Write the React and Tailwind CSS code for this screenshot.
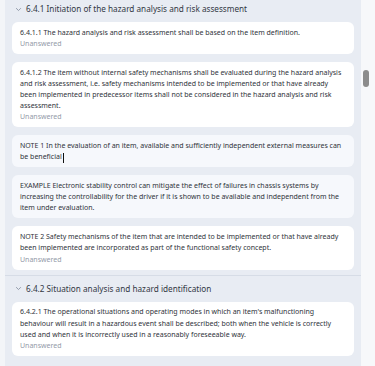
import React from "react";

const Chevron = () => (
  <svg width="7" height="7" viewBox="0 0 10 10" className="shrink-0">
    <path d="M2 3.5 L5 6.5 L8 3.5" fill="none" stroke="#8a93a3" strokeWidth="1.3" strokeLinecap="round" strokeLinejoin="round" />
  </svg>
);

const Card = ({ children, answered = true, note = false, caret = false }) => (
  <div className={`rounded-[6px] px-[8px] py-[4.75px] ${note ? "bg-[#f6f8fc]" : "bg-white"}`}>
    <div className="text-[#2f333a] text-[7px] leading-[11.2px]">
      {children}
      {caret && <span className="inline-block w-[1.2px] h-[10px] bg-[#111] align-middle ml-[1px]" />}
    </div>
    {answered && <div className="text-[#939aa8] text-[7px] leading-[11.2px]">Unanswered</div>}
  </div>
);

const Header = ({ children }) => (
  <div className="flex items-center h-[18px] pl-[10px] gap-[4px]">
    <Chevron />
    <span className="text-[#323844] text-[8.2px] leading-[18px]">{children}</span>
  </div>
);

export default function App() {
  return (
    <div className="w-[375px] h-[366px] overflow-hidden flex bg-[#f7f8fa]" style={{ fontFamily: '"Noto Sans", sans-serif' }}>
      <div className="w-[5px] shrink-0 bg-[#f3f5f8]" />
      <div className="w-[356px] shrink-0 bg-[#e8ecf3] h-full">
        <div className="flex flex-col pb-[5px] border-b border-[#d6dce6]">
          <Header>6.4.1 Initiation of the hazard analysis and risk assessment</Header>
          <div className="flex flex-col gap-[8px] px-[7px] mt-[4px]">
            <Card>6.4.1.1 The hazard analysis and risk assessment shall be based on the item definition.</Card>
            <Card>
              6.4.1.2 The item without internal safety mechanisms shall be evaluated during the hazard analysis and risk assessment, i.e. safety mechanisms intended to be implemented or that have already been implemented in predecessor items shall not be considered in the hazard analysis and risk assessment.
            </Card>
            <Card answered={false} note caret>
              NOTE 1 In the evaluation of an item, available and sufficiently independent external measures can be beneficial
            </Card>
            <Card answered={false} note>
              EXAMPLE Electronic stability control can mitigate the effect of failures in chassis systems by increasing the controllability for the driver if it is shown to be available and independent from the item under evaluation.
            </Card>
            <Card>
              NOTE 2 Safety mechanisms of the item that are intended to be implemented or that have already been implemented are incorporated as part of the functional safety concept.
            </Card>
          </div>
        </div>
        <div className="flex flex-col pt-[4px]">
          <Header>6.4.2 Situation analysis and hazard identification</Header>
          <div className="flex flex-col gap-[8px] px-[7px] mt-[4px]">
            <Card>
              6.4.2.1 The operational situations and operating modes in which an item's malfunctioning behaviour will result in a hazardous event shall be described; both when the vehicle is correctly used and when it is incorrectly used in a reasonably foreseeable way.
            </Card>
          </div>
        </div>
      </div>
      <div className="flex-1 relative">
        <div className="absolute left-[2px] top-[70px] w-[6px] h-[17px] rounded-full bg-[#8c8c8c]" />
      </div>
    </div>
  );
}
